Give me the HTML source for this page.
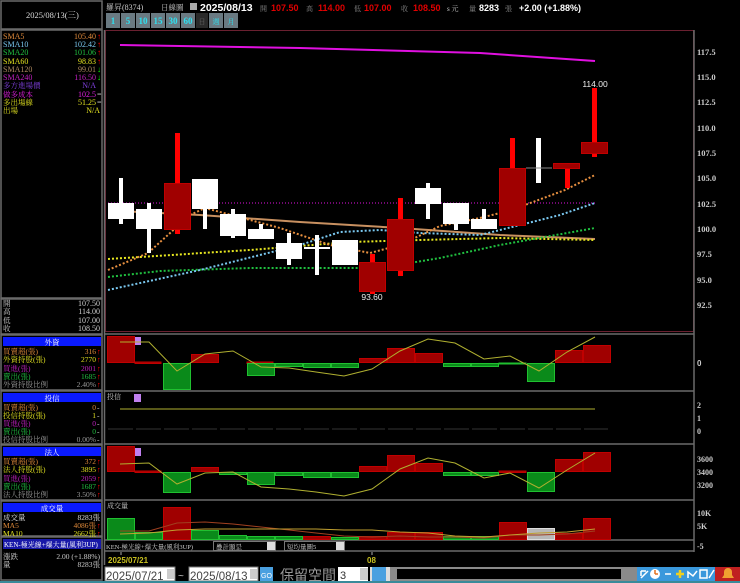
<!DOCTYPE html>
<html><head><meta charset="utf-8"><style>
html,body{margin:0;padding:0;background:#000;width:740px;height:583px;overflow:hidden}
svg{display:block}
text{font-family:"Liberation Serif","Noto Serif CJK SC","Noto Sans CJK TC",serif}
.s{font-family:"Liberation Sans","Noto Sans CJK TC",sans-serif}
.b{font-family:"Liberation Sans","Noto Sans CJK TC",sans-serif;font-weight:bold}
</style></head><body>
<svg width="740" height="583" viewBox="0 0 740 583" xmlns="http://www.w3.org/2000/svg" font-size="8.5">
<rect width="740" height="583" fill="#000"/>
<!-- LEFT PANEL -->
<g stroke="#6a6a6a" stroke-width="1.5" fill="none">
<rect x="1" y="1" width="101" height="28"/>
<rect x="1" y="30" width="101" height="268"/>
<rect x="1" y="299" width="101" height="35"/>
<rect x="1" y="335" width="101" height="55"/>
<rect x="1" y="391" width="101" height="53"/>
<rect x="1" y="445" width="101" height="55"/>
<rect x="1" y="501" width="101" height="35"/>
<rect x="1" y="537" width="101" height="43"/>
</g>
<text x="26" y="18" fill="#ddd" font-size="8.5">2025/08/13(三)</text>
<g font-size="8">
<text x="3" y="39" fill="#e08a3a">SMA5</text><text x="96" y="39" fill="#e08a3a" text-anchor="end">105.40</text><text x="97" y="39" fill="#f00">↑</text>
<text x="3" y="47" fill="#7ac8f0">SMA10</text><text x="96" y="47" fill="#7ac8f0" text-anchor="end">102.42</text><text x="97" y="47" fill="#f00">↑</text>
<text x="3" y="55" fill="#20c040">SMA20</text><text x="96" y="55" fill="#20c040" text-anchor="end">101.06</text><text x="97" y="55" fill="#f00">↑</text>
<text x="3" y="64" fill="#e0e020">SMA60</text><text x="96" y="64" fill="#e0e020" text-anchor="end">98.83</text><text x="97" y="64" fill="#f00">↑</text>
<text x="3" y="72" fill="#b08a60">SMA120</text><text x="96" y="72" fill="#b08a60" text-anchor="end">99.01</text><text x="97" y="72" fill="#0f0">↓</text>
<text x="3" y="80" fill="#c020c0">SMA240</text><text x="96" y="80" fill="#c020c0" text-anchor="end">116.50</text><text x="97" y="80" fill="#0f0">↓</text>
<text x="3" y="88" fill="#8040e0" font-size="7.5">多方進場價</text><text x="96" y="88" fill="#8040e0" text-anchor="end">N/A</text>
<text x="3" y="97" fill="#e020e0" font-size="7.5">做多成本</text><text x="96" y="97" fill="#e020e0" text-anchor="end">102.5</text><text x="97" y="97" fill="#ccc">=</text>
<text x="3" y="105" fill="#e0e020" font-size="7.5">多出場線</text><text x="96" y="105" fill="#e0e020" text-anchor="end">51.25</text><text x="97" y="105" fill="#ccc">=</text>
<text x="3" y="113" fill="#e0e020" font-size="7.5">出場</text><text x="100" y="113" fill="#e0e020" text-anchor="end">N/A</text>
<text x="3" y="306" fill="#ccc" font-size="7.5">開</text><text x="100" y="306" fill="#ccc" text-anchor="end">107.50</text>
<text x="3" y="314" fill="#ccc" font-size="7.5">高</text><text x="100" y="314" fill="#ccc" text-anchor="end">114.00</text>
<text x="3" y="323" fill="#ccc" font-size="7.5">低</text><text x="100" y="323" fill="#ccc" text-anchor="end">107.00</text>
<text x="3" y="331" fill="#ccc" font-size="7.5">收</text><text x="100" y="331" fill="#ccc" text-anchor="end">108.50</text>
</g>
<!-- section headers -->
<g fill="#0a1aff"><rect x="3" y="337" width="98" height="9"/><rect x="3" y="393" width="98" height="9"/><rect x="3" y="447" width="98" height="9"/><rect x="3" y="503" width="98" height="9"/><rect x="3" y="539" width="98" height="10" fill="#1818a8"/></g>
<g font-size="7.5" fill="#fff" text-anchor="middle"><text x="52" y="345">外資</text><text x="52" y="401">投信</text><text x="52" y="455">法人</text><text x="52" y="511">成交量</text></g>
<text x="4" y="547" fill="#fff" font-size="7">KEN-極光線+爆大量(風利3UP)</text>
<g font-size="7.5">
<text x="3" y="354" fill="#e08a3a">買賣超(張)</text><text x="96" y="354" fill="#e08a3a" text-anchor="end">316</text><text x="97" y="354" fill="#f00">↑</text>
<text x="3" y="362" fill="#e0e020">外資持股(張)</text><text x="96" y="362" fill="#e0e020" text-anchor="end">2770</text><text x="97" y="362" fill="#f00">↑</text>
<text x="3" y="371" fill="#c020c0">買進(張)</text><text x="96" y="371" fill="#c020c0" text-anchor="end">2001</text><text x="97" y="371" fill="#f00">↑</text>
<text x="3" y="379" fill="#20c040">賣出(張)</text><text x="96" y="379" fill="#20c040" text-anchor="end">1685</text><text x="97" y="379" fill="#f00">↑</text>
<text x="3" y="387" fill="#999">外資持股比例</text><text x="96" y="387" fill="#999" text-anchor="end">2.40%</text><text x="97" y="387" fill="#f00">↑</text>
<text x="3" y="410" fill="#e08a3a">買賣超(張)</text><text x="96" y="410" fill="#e08a3a" text-anchor="end">0</text><text x="97" y="410" fill="#ccc">-</text>
<text x="3" y="418" fill="#e0e020">投信持股(張)</text><text x="96" y="418" fill="#e0e020" text-anchor="end">1</text><text x="97" y="418" fill="#ccc">-</text>
<text x="3" y="426" fill="#c020c0">買進(張)</text><text x="96" y="426" fill="#c020c0" text-anchor="end">0</text><text x="97" y="426" fill="#ccc">-</text>
<text x="3" y="434" fill="#20c040">賣出(張)</text><text x="96" y="434" fill="#20c040" text-anchor="end">0</text><text x="97" y="434" fill="#ccc">-</text>
<text x="3" y="442" fill="#999">投信持股比例</text><text x="96" y="442" fill="#999" text-anchor="end">0.00%</text><text x="97" y="442" fill="#ccc">-</text>
<text x="3" y="464" fill="#e08a3a">買賣超(張)</text><text x="96" y="464" fill="#e08a3a" text-anchor="end">372</text><text x="97" y="464" fill="#f00">↑</text>
<text x="3" y="472" fill="#e0e020">法人持股(張)</text><text x="96" y="472" fill="#e0e020" text-anchor="end">3895</text><text x="97" y="472" fill="#f00">↑</text>
<text x="3" y="481" fill="#c020c0">買進(張)</text><text x="96" y="481" fill="#c020c0" text-anchor="end">2059</text><text x="97" y="481" fill="#f00">↑</text>
<text x="3" y="489" fill="#20c040">賣出(張)</text><text x="96" y="489" fill="#20c040" text-anchor="end">1687</text><text x="97" y="489" fill="#f00">↑</text>
<text x="3" y="497" fill="#999">法人持股比例</text><text x="96" y="497" fill="#999" text-anchor="end">3.50%</text><text x="97" y="497" fill="#f00">↑</text>
<text x="3" y="520" fill="#ddd">成交量</text><text x="100" y="520" fill="#ddd" text-anchor="end">8283張</text>
<text x="3" y="528" fill="#e08a3a">MA5</text><text x="96" y="528" fill="#e08a3a" text-anchor="end">4086張</text><text x="97" y="528" fill="#f00">↑</text>
<text x="3" y="536" fill="#e0e020">MA10</text><text x="96" y="536" fill="#e0e020" text-anchor="end">2662張</text><text x="97" y="536" fill="#f00">↑</text>
<text x="3" y="559" fill="#ccc">漲跌</text><text x="100" y="559" fill="#ccc" text-anchor="end">2.00 (+1.88%)</text>
<text x="3" y="567" fill="#ccc">量</text><text x="100" y="567" fill="#ccc" text-anchor="end">8283張</text>
</g>
<!-- TOP BAR -->
<text x="106" y="10" fill="#ccc" font-size="8">羅昇(8374)</text>
<text x="161" y="10" fill="#ccc" font-size="7.5">日線圖</text>
<rect x="190" y="3" width="7" height="7" fill="#aaa"/>
<text x="200" y="11" class="b" font-size="10.5" fill="#fff">2025/08/13</text>
<text x="260" y="11" fill="#888" font-size="7">開</text><text x="271" y="11" fill="#e00000" class="b" font-size="9">107.50</text>
<text x="306" y="11" fill="#888" font-size="7">高</text><text x="318" y="11" fill="#e00000" class="b" font-size="9">114.00</text>
<text x="354" y="11" fill="#888" font-size="7">低</text><text x="364" y="11" fill="#e00000" class="b" font-size="9">107.00</text>
<text x="401" y="11" fill="#888" font-size="7">收</text><text x="413" y="11" fill="#e00000" class="b" font-size="9">108.50</text>
<text x="447" y="11" fill="#ccc" font-size="7">s 元</text>
<text x="469" y="11" fill="#888" font-size="7">量</text><text x="479" y="11" fill="#fff" class="b" font-size="9">8283</text><text x="505" y="11" fill="#888" font-size="7">張</text>
<text x="519" y="11" fill="#fff" class="b" font-size="9">+2.00 (+1.88%)</text>
<g>
<rect x="106" y="13" width="14" height="15" fill="#6a7a82"/><rect x="121" y="13" width="14" height="15" fill="#6a7a82"/><rect x="136" y="13" width="14" height="15" fill="#6a7a82"/><rect x="151" y="13" width="14" height="15" fill="#6a7a82"/><rect x="166" y="13" width="14" height="15" fill="#6a7a82"/><rect x="181" y="13" width="14" height="15" fill="#6a7a82"/><rect x="196" y="13" width="12" height="15" fill="#2a2a2a"/><rect x="209" y="13" width="14" height="15" fill="#6a7a82"/><rect x="224" y="13" width="14" height="15" fill="#6a7a82"/>
<g class="b" font-size="9" fill="#30e0f0" text-anchor="middle"><text x="113" y="24">1</text><text x="128" y="24">5</text><text x="143" y="24">10</text><text x="158" y="24">15</text><text x="173" y="24">30</text><text x="188" y="24">60</text></g>
<g font-size="7" text-anchor="middle"><text x="202" y="24" fill="#666">日</text><text x="216" y="24" fill="#30e0f0">週</text><text x="231" y="24" fill="#30e0f0">月</text></g>
</g>
<!-- CHART FRAMES -->
<rect x="105.5" y="30.5" width="588" height="301" fill="none" stroke="#6a2030"/>
<line x1="694" y1="30" x2="694" y2="552" stroke="#6a6a6a" stroke-width="1.5"/>
<g stroke="#6a6a6a" stroke-width="1.5"><line x1="104" y1="334" x2="694" y2="334"/><line x1="104" y1="391" x2="694" y2="391"/><line x1="104" y1="444" x2="694" y2="444"/><line x1="104" y1="500" x2="694" y2="500"/><line x1="104" y1="540" x2="694" y2="540"/><line x1="104" y1="551" x2="694" y2="551"/><line x1="104.5" y1="30" x2="104.5" y2="565"/></g>
<!-- price axis -->
<g class="b" font-size="8.5" fill="#ccc"><text x="697" y="55">117.5</text><text x="697" y="80">115.0</text><text x="697" y="105">112.5</text><text x="697" y="131">110.0</text><text x="697" y="156">107.5</text><text x="697" y="181">105.0</text><text x="697" y="207">102.5</text><text x="697" y="232">100.0</text><text x="697" y="257">97.5</text><text x="697" y="283">95.0</text><text x="697" y="308">92.5</text></g>
<!-- MA lines -->
<polyline points="120,45 300,48 480,53 595,61" fill="none" stroke="#e010e0" stroke-width="2"/>
<line x1="108" y1="203" x2="595" y2="203" stroke="#e010e0" stroke-dasharray="1,2"/>
<polyline points="120,211 200,215 300,222 400,228 500,235 595,239" fill="none" stroke="#c89060" stroke-width="2"/>
<g fill="none" stroke-width="2" stroke-dasharray="2,2">
<polyline points="108,259 250,250 350,242 420,240 500,238 595,240" stroke="#e8e820"/>
<polyline points="108,277 160,271 250,268 380,268 440,258 500,245 595,228" stroke="#20c040"/>
<polyline points="108,290 200,270 300,245 340,232 380,230 420,233 480,235 520,225 560,215 595,203" stroke="#7ac8f0"/>
<polyline points="108,270 148,253 190,215 205,208 280,228 330,245 370,253 400,245 440,226 480,218 500,213 525,205 565,190 595,175" stroke="#e89040"/>
</g>
<!-- candles -->
<g fill="#fff">
<rect x="119" y="178" width="4" height="46"/><rect x="108" y="203" width="26" height="16"/>
<rect x="147" y="203" width="4" height="50"/><rect x="136" y="209" width="26" height="20"/>
<rect x="203" y="179" width="4" height="50"/><rect x="192" y="179" width="26" height="30"/>
<rect x="231" y="209" width="4" height="29"/><rect x="220" y="214" width="26" height="22"/>
<rect x="259" y="224" width="4" height="15"/><rect x="248" y="229" width="26" height="10"/>
<rect x="287" y="233" width="4" height="32"/><rect x="276" y="243" width="26" height="16"/>
<rect x="315" y="235" width="4" height="40"/><rect x="304" y="247" width="26" height="2"/>
<rect x="332" y="240" width="26" height="25"/>
<rect x="426" y="183" width="4" height="36"/><rect x="415" y="188" width="26" height="16"/>
<rect x="454" y="203" width="4" height="27"/><rect x="443" y="203" width="26" height="21"/>
<rect x="482" y="209" width="4" height="20"/><rect x="471" y="219" width="26" height="10"/>
<rect x="536" y="138" width="5" height="45"/>
</g>
<line x1="526" y1="168" x2="552" y2="168" stroke="#888"/>
<g fill="#f00">
<rect x="175" y="133" width="5" height="101"/><rect x="370" y="254" width="5" height="40"/><rect x="398" y="198" width="5" height="78"/><rect x="510" y="138" width="5" height="30"/><rect x="565" y="168" width="5" height="20"/><rect x="592" y="88" width="5" height="69"/>
</g>
<g fill="#a00000" stroke="#c00000">
<rect x="164.5" y="183.5" width="26" height="46"/><rect x="359.5" y="262.5" width="26" height="29"/><rect x="387.5" y="219.5" width="26" height="51"/><rect x="499.5" y="168.5" width="26" height="57"/><rect x="553.5" y="163.5" width="26" height="5"/><rect x="581.5" y="142.5" width="26" height="11"/>
</g>
<text x="595" y="87" fill="#eee" text-anchor="middle" class="s" font-size="8.5">114.00</text>
<text x="372" y="300" fill="#eee" text-anchor="middle" class="s" font-size="8.5">93.60</text>
<!-- 外資 panel -->
<text x="107" y="343" fill="#ccc" font-size="7">外資</text><rect x="134" y="337" width="7" height="8" fill="#c080f0"/>
<g fill="#a00000" stroke="#c00000"><rect x="107.5" y="336.5" width="27" height="26"/><rect x="135" y="362" width="26" height="1.5"/><rect x="191.5" y="354.5" width="27" height="8"/><rect x="247" y="362" width="26" height="1.5"/><rect x="359.5" y="358.5" width="27" height="4"/><rect x="387.5" y="348.5" width="27" height="14"/><rect x="415.5" y="353.5" width="27" height="9"/><rect x="555.5" y="350.5" width="27" height="12"/><rect x="583.5" y="345.5" width="27" height="17"/></g>
<g fill="#0a8a1a" stroke="#20c030"><rect x="163.5" y="363.5" width="27" height="26"/><rect x="247.5" y="363.5" width="27" height="12"/><rect x="275.5" y="363.5" width="27" height="3"/><rect x="303.5" y="363.5" width="27" height="4"/><rect x="331.5" y="363.5" width="27" height="4"/><rect x="443.5" y="363.5" width="27" height="3"/><rect x="471.5" y="363.5" width="27" height="3"/><rect x="499" y="363" width="27" height="1"/><rect x="527.5" y="363.5" width="27" height="18"/></g>
<polyline points="120,342 149,342 177,371 205,354 233,351 261,367 289,368 316,372 344,376 372,369 400,351 428,339 455,343 484,359 510,356 539,371 567,352 595,337" fill="none" stroke="#b0b030"/>
<text x="697" y="366" fill="#ccc" class="b" font-size="8">0</text>
<!-- 投信 -->
<text x="107" y="399" fill="#ccc" font-size="7">投信</text><rect x="134" y="394" width="7" height="8" fill="#c080f0"/>
<line x1="120" y1="409" x2="595" y2="409" stroke="#b0b030"/>
<line x1="108" y1="429" x2="608" y2="429" stroke="#333" stroke-dasharray="25,3"/>
<g class="b" font-size="8" fill="#ccc"><text x="697" y="408">2</text><text x="697" y="421">1</text><text x="697" y="434">0</text></g>
<!-- 法人 -->
<text x="107" y="453" fill="#ccc" font-size="7">法人</text><rect x="134" y="448" width="7" height="8" fill="#c080f0"/>
<g fill="#a00000" stroke="#c00000"><rect x="107.5" y="446.5" width="27" height="25"/><rect x="135" y="471" width="26" height="1.5"/><rect x="191.5" y="467.5" width="27" height="4"/><rect x="359.5" y="466.5" width="27" height="5"/><rect x="387.5" y="455.5" width="27" height="16"/><rect x="415.5" y="463.5" width="27" height="8"/><rect x="499" y="471" width="27" height="1.5"/><rect x="555.5" y="459.5" width="27" height="12"/><rect x="583.5" y="452.5" width="27" height="19"/></g>
<g fill="#0a8a1a" stroke="#20c030"><rect x="163.5" y="472.5" width="27" height="20"/><rect x="219.5" y="472.5" width="27" height="2"/><rect x="247.5" y="472.5" width="27" height="12"/><rect x="275.5" y="472.5" width="27" height="3"/><rect x="303.5" y="472.5" width="27" height="5"/><rect x="331.5" y="472.5" width="27" height="5"/><rect x="443.5" y="472.5" width="27" height="3"/><rect x="471.5" y="472.5" width="27" height="3"/><rect x="527.5" y="472.5" width="27" height="19"/></g>
<polyline points="120,464 149,463 177,484 205,473 233,472 261,487 289,489 316,492 344,496 372,489 400,469 428,458 455,463 484,478 510,473 539,488 567,470 595,453" fill="none" stroke="#b0b030"/>
<g class="b" font-size="8" fill="#ccc"><text x="697" y="462">3600</text><text x="697" y="475">3400</text><text x="697" y="488">3200</text></g>
<!-- 成交量 -->
<text x="107" y="508" fill="#ccc" font-size="7">成交量</text>
<g fill="#0a8a1a" stroke="#20c030"><rect x="107.5" y="518.5" width="27" height="21"/><rect x="135.5" y="532.5" width="27" height="7"/><rect x="191.5" y="530.5" width="27" height="9"/><rect x="219.5" y="535.5" width="27" height="4"/><rect x="247.5" y="536.5" width="27" height="3"/><rect x="275.5" y="536.5" width="27" height="3"/><rect x="331.5" y="537.5" width="27" height="2"/><rect x="443.5" y="536.5" width="27" height="3"/><rect x="471.5" y="536.5" width="27" height="3"/></g>
<g fill="#a00000" stroke="#c00000"><rect x="163.5" y="507.5" width="27" height="32"/><rect x="303.5" y="536.5" width="27" height="3"/><rect x="359.5" y="536.5" width="27" height="3"/><rect x="387.5" y="532.5" width="27" height="7"/><rect x="415.5" y="532.5" width="27" height="7"/><rect x="499.5" y="522.5" width="27" height="17"/><rect x="555.5" y="533.5" width="27" height="6"/><rect x="583.5" y="518.5" width="27" height="21"/></g>
<rect x="527.5" y="528.5" width="27" height="11" fill="#b8b8b8" stroke="#ddd"/>
<polyline points="120,531 149,531 177,523 205,522 233,524 261,527 289,530 316,533 344,536 372,537 400,536 428,537 455,537 484,538 510,535 539,535 567,534 595,531" fill="none" stroke="#a04020"/>
<polyline points="120,534 149,533 177,530 205,529 233,529 261,529 289,529 316,529 344,530 372,530 400,532 428,533 455,536 484,537 510,535 539,533 567,532 595,529" fill="none" stroke="#c0a030"/>
<g class="b" font-size="8" fill="#ccc"><text x="697" y="516">10K</text><text x="697" y="529">5K</text><text x="697" y="549">-5</text></g>
<!-- KEN row -->
<text x="106" y="549" fill="#ccc" font-size="6.5">KEN-極光線+爆大量(風利3UP)</text>
<rect x="213.5" y="541.5" width="62" height="9" fill="#000" stroke="#777"/><text x="216" y="549" fill="#ccc" font-size="6.5">疊計顯昰</text><rect x="267" y="542" width="8" height="8" fill="#ddd"/>
<rect x="284.5" y="541.5" width="60" height="9" fill="#000" stroke="#777"/><text x="287" y="549" fill="#ccc" font-size="6.5">短均量圖5</text><rect x="336" y="542" width="8" height="8" fill="#ddd"/>
<line x1="121" y1="552" x2="121" y2="555" stroke="#aaa"/><line x1="372" y1="552" x2="372" y2="555" stroke="#aaa"/>
<text x="108" y="563" fill="#c8c020" class="b" font-size="8">2025/07/21</text>
<text x="367" y="563" fill="#c8c020" class="b" font-size="8">08</text>
<!-- bottom controls -->
<rect x="105" y="567" width="70" height="14" fill="#fff" stroke="#777"/><text x="106" y="580" fill="#444" class="s" font-size="11.5">2025/07/21</text><rect x="167" y="569" width="7" height="10" fill="#ccc"/>
<text x="178" y="579" fill="#ccc" class="s" font-size="10">~</text>
<rect x="189" y="567" width="69" height="14" fill="#fff" stroke="#777"/><text x="190" y="580" fill="#444" class="s" font-size="11.5">2025/08/13</text><rect x="250" y="569" width="7" height="10" fill="#ccc"/>
<rect x="260" y="567" width="13" height="14" fill="#4aa0e0"/><text x="261" y="578" fill="#fff" font-size="7" class="s">GO</text>
<text x="280" y="580" fill="#999" font-size="14" style="font-family:'Noto Sans CJK TC',sans-serif">保留空間</text>
<rect x="338" y="567" width="30" height="14" fill="#fff"/><text x="340" y="579" fill="#333" class="s" font-size="11">3</text><rect x="360" y="568" width="8" height="12" fill="#ccc"/>
<rect x="370" y="567" width="20" height="14" fill="#ddd"/><rect x="372" y="567" width="14" height="14" fill="#4aa0e0"/>
<rect x="390" y="567" width="247" height="14" fill="#8a8a8a"/><rect x="397" y="569" width="224" height="10" fill="#000"/>
<rect x="637" y="567" width="78" height="14" fill="#3a98dc"/>
<g stroke="#fff" stroke-width="1.5" fill="none"><path d="M641 578 L648 571 M641 571 H646 M641 571 V576"/><path d="M665 574 H671"/><path d="M676 574 H684 M680 570 V578" stroke="#f0d020" stroke-width="2.5"/><path d="M688 578 V572 L693 576 L697 571"/><rect x="700" y="570" width="7" height="8"/><path d="M709 578 L714 570"/></g>
<circle cx="655" cy="574" r="5" fill="#fff"/><path d="M655 574 V570 M655 574 H658" stroke="#e07020" stroke-width="1.5"/>
<rect x="715" y="567" width="25" height="14" fill="#c02020"/><path d="M722 578 H734 L732 575 V572 A4 4 0 0 0 724 572 V575 Z" fill="#f0a030"/>
<rect x="0" y="581" width="740" height="2" fill="#3a8a9a"/>
</svg>
</body></html>
